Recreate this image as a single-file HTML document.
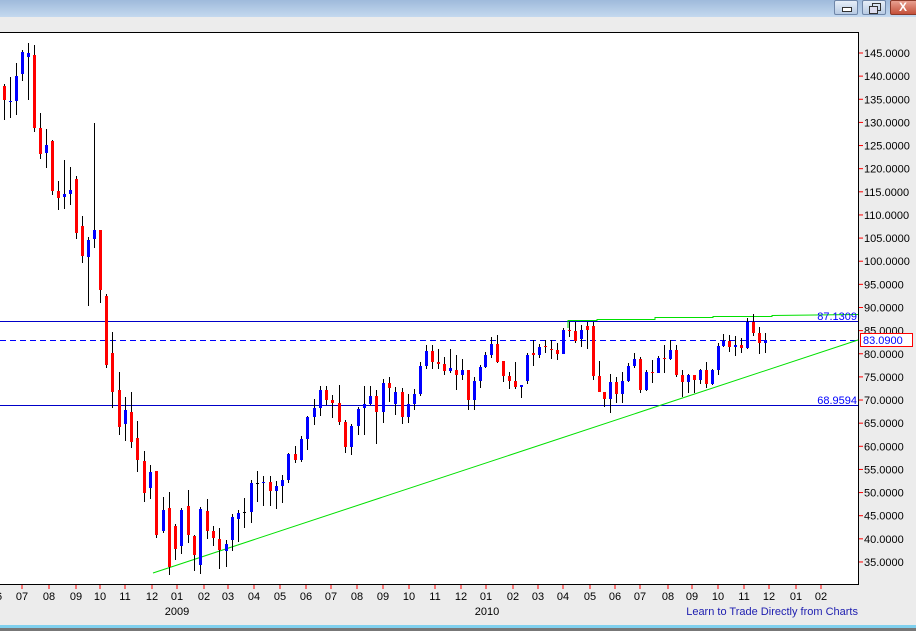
<!DOCTYPE html>
<html><head><meta charset="utf-8">
<style>
html,body{margin:0;padding:0;width:916px;height:631px;overflow:hidden;background:#ececec;font-family:"Liberation Sans",sans-serif;}
#tb{position:absolute;left:0;top:0;width:916px;height:17px;background:linear-gradient(#9fbadb,#c4d9ef);}
.btn{position:absolute;top:0;height:15px;border:1px solid #6f86a8;border-radius:2px;background:linear-gradient(#e6eef8,#b8cbe3);box-sizing:border-box;}
svg{position:absolute;left:0;top:0;}
</style></head><body>
<div id="tb"></div>
<div class="btn" style="left:834px;width:24px;"><div style="position:absolute;left:7px;top:6px;width:8px;height:3px;border:1px solid #333;background:#fff"></div></div>
<div class="btn" style="left:862px;width:24px;"><div style="position:absolute;left:9px;top:2px;width:7px;height:6px;border:1px solid #333;"></div><div style="position:absolute;left:6px;top:5px;width:7px;height:6px;border:1px solid #333;background:#dde"></div></div>
<div class="btn" style="left:890px;width:30px;background:linear-gradient(#e8a090,#c4503a);border-color:#8a3a2a;color:#fff;font-weight:bold;font-size:12px;line-height:13px;padding-left:8px">X</div>
<svg id="s" width="916" height="631" xmlns="http://www.w3.org/2000/svg"></svg>
<div style="position:absolute;left:0;top:625px;width:916px;height:3px;background:#7fd0ee"></div>
<div style="position:absolute;left:0;top:628px;width:916px;height:3px;background:#777"></div>
<script>
var g1=[[86,100,84,120,'r'],[101,102,77,118,'b'],[76,101,63,115,'b'],[52,74,50,81,'b'],[53,57,43,100,'b'],[55,128,45,132,'r'],[128,154,113,159,'r'],[145,153,129,168,'b'],[141,191,140,195,'r'],[191,198,181,210,'r'],[194,197,160,209,'b'],[190,194,167,205,'b'],[179,233,176,239,'r'],[226,256,216,263,'r'],[240,257,237,306,'b'],[230,239,123,248,'b'],[230,290,230,303,'r']];
var g2=[[296,365,294,368,'r'],[353,392,332,408,'r'],[390,427,372,435,'r'],[410,424,397,441,'b'],[412,442,392,448,'r'],[438,460,421,472,'r'],[461,493,451,502,'r'],[472,488,465,499,'b'],[471,535,471,538,'r'],[510,531,497,533,'b'],[508,567,492,575,'r'],[526,549,524,560,'r'],[510,546,508,554,'b'],[506,535,490,543,'r'],[536,555,535,571,'r'],[509,565,507,574,'b'],[511,531,499,539,'r'],[531,538,526,546,'r'],[539,550,528,569,'r'],[544,551,540,567,'b'],[517,540,514,551,'b'],[513,519,510,542,'b'],[512,513,498,528,'k'],[483,512,480,523,'b'],[483,484,471,502,'k'],[482,483,476,506,'b'],[482,491,476,506,'r'],[486,491,481,509,'b'],[480,486,475,503,'b'],[454,480,453,483,'b'],[454,460,446,463,'r'],[439,460,436,462,'b'],[417,439,416,450,'b'],[408,417,399,425,'b'],[390,408,386,416,'b'],[390,400,386,405,'r'],[400,403,395,418,'r'],[403,422,385,425,'r'],[422,447,420,453,'r'],[426,447,424,455,'b'],[409,426,407,435,'b'],[404,408,386,435,'b'],[396,404,386,405,'b'],[396,412,390,444,'r'],[383,412,379,423,'b'],[383,388,377,402,'r'],[392,404,387,415,'b'],[392,417,388,424,'r'],[404,417,394,423,'b'],[394,404,389,410,'b']];
var g3=[[366,394,362,396,'b'],[351,366,345,369,'b'],[351,362,345,369,'r'],[362,364,349,369,'r'],[364,371,357,375,'r'],[368,371,349,373,'b'],[370,375,355,390,'r'],[370,375,359,380,'b'],[370,400,370,410,'r'],[381,400,377,410,'b'],[367,381,365,388,'b'],[355,367,352,368,'b'],[344,355,337,358,'b'],[344,362,335,363,'r'],[361,376,361,382,'r'],[376,381,372,389,'r'],[381,387,362,389,'r'],[385,387,385,398,'b'],[355,381,353,384,'b'],[353,355,340,366,'r'],[347,355,344,358,'b'],[346,347,340,353,'r'],[349,350,340,359,'r'],[350,354,343,360,'r'],[330,354,328,354,'b'],[330,331,322,337,'r'],[331,341,322,343,'r'],[330,339,325,347,'b'],[326,330,322,349,'r'],[326,376,322,380,'r'],[376,392,361,392,'r'],[392,399,392,407,'r'],[382,399,374,413,'b'],[382,394,377,403,'r'],[381,394,372,403,'b'],[366,381,363,382,'b'],[359,366,353,368,'b'],[359,390,357,393,'r'],[372,390,370,391,'b'],[372,373,360,383,'r'],[358,373,356,373,'b'],[358,359,345,373,'r'],[350,359,340,360,'b'],[350,375,345,377,'r'],[375,382,370,397,'r'],[375,382,374,393,'b'],[375,380,375,393,'r'],[370,380,369,384,'b'],[370,384,362,388,'r'],[370,384,369,385,'b'],[346,370,343,375,'b'],[341,346,334,347,'b'],[341,347,335,352,'r'],[345,347,336,356,'b'],[345,348,338,353,'r'],[322,348,318,349,'b'],[322,333,314,336,'r'],[333,343,327,354,'r'],[340,343,333,353,'b']];
var h=[];
h.push('<rect x="0" y="32" width="858" height="552" fill="#fff"/>');
h.push('<line x1="0" y1="32.5" x2="859" y2="32.5" stroke="#000"/>');
h.push('<line x1="858.5" y1="32" x2="858.5" y2="585" stroke="#000"/>');
h.push('<line x1="0" y1="584.5" x2="859" y2="584.5" stroke="#000"/>');
h.push('<line x1="0" y1="321.5" x2="858" y2="321.5" stroke="#0000c8"/>');
h.push('<line x1="0" y1="405.5" x2="858" y2="405.5" stroke="#0000c8"/>');
h.push('<line x1="0" y1="340.5" x2="858" y2="340.5" stroke="#0000ff" stroke-dasharray="6,4"/>');
h.push('<polyline points="568,328 568,320.5 597,320.5 597,319.5 655,319.5 655,317.5 713,317.5 713,316.5 772,316.5 772,315.5 858,314.5" fill="none" stroke="#00e000"/>');
h.push('<line x1="153" y1="573" x2="858" y2="340" stroke="#00e000"/>');
function cand(x,c){var col=c[4]=='r'?'#ff0000':(c[4]=='b'?'#0000ff':'#000');
 h.push('<line x1="'+(x+0.5)+'" y1="'+c[2]+'" x2="'+(x+0.5)+'" y2="'+c[3]+'" stroke="#000"/>');
 var bh=Math.max(1,c[1]-c[0]);
 h.push('<rect x="'+(x-1)+'" y="'+c[0]+'" width="3" height="'+bh+'" fill="'+col+'"/>');}
g1.forEach(function(c,i){cand(Math.round(4+6*i),c);});
g2.forEach(function(c,i){cand(Math.round(106+i*6.29),c);});
g3.forEach(function(c,i){cand(Math.round(420+i*5.95),c);});
for(var p=145;p>=35;p-=5){var y=53+(145-p)*4.627;
 h.push('<line x1="859" y1="'+y+'" x2="863" y2="'+y+'" stroke="#f00"/>');
 h.push('<text x="864" y="'+(y+4)+'" font-size="11" fill="#000">'+p.toFixed(4)+'</text>');}
h.push('<rect x="860.5" y="333.5" width="52" height="13" fill="#fff" stroke="#f00"/>');
h.push('<text x="863" y="344" font-size="11" fill="#0000ff">83.0900</text>');
h.push('<text x="857" y="320" font-size="11" fill="#0000ff" text-anchor="end">87.1309</text>');
h.push('<text x="857" y="404" font-size="11" fill="#0000ff" text-anchor="end">68.9594</text>');
var mx=[-4,22,49,76,100,125,152,177,204,228,254,280,306,331,357,383,409,435,461,486,513,538,563,590,615,640,668,692,718,744,769,796,821];
var ml=['06','07','08','09','10','11','12','01','02','03','04','05','06','07','08','09','10','11','12','01','02','03','04','05','06','07','08','09','10','11','12','01','02'];
mx.forEach(function(x,i){h.push('<line x1="'+x+'" y1="585" x2="'+x+'" y2="589" stroke="#f00"/>');
 h.push('<text x="'+x+'" y="600" font-size="11" text-anchor="middle" fill="#000">'+ml[i]+'</text>');});
h.push('<text x="177" y="615" font-size="11" text-anchor="middle" fill="#000">2009</text>');
h.push('<text x="487" y="615" font-size="11" text-anchor="middle" fill="#000">2010</text>');
h.push('<text x="858" y="615" font-size="11" text-anchor="end" fill="#2020b0">Learn to Trade Directly from Charts</text>');
document.getElementById('s').innerHTML=h.join('');
</script>
</body></html>
